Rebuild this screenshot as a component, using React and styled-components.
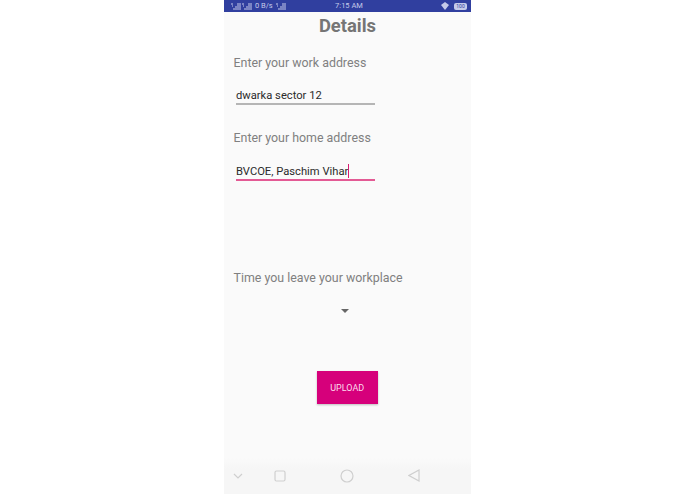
import styled, { createGlobalStyle } from "styled-components";

const Global = createGlobalStyle`
  html, body { margin: 0; background: #fff; }
  #root { width: 695px; height: 494px; overflow: hidden; }
`;

const Page = styled.div`
  display: flex;
  justify-content: center;
  height: 494px;
  font-family: Roboto, "Liberation Sans", sans-serif;
`;

const Phone = styled.div`
  width: 247px;
  height: 494px;
  background: #fafafa;
  display: flex;
  flex-direction: column;
`;

const StatusBar = styled.div`
  height: 12px;
  flex: none;
  background: #303f9f;
  color: #c5cae9;
  font-size: 7.5px;
  line-height: 12px;
  display: grid;
  grid-template-columns: 1fr auto 1fr;
  align-items: center;
  padding: 0 4px 0 7px;
  box-sizing: border-box;
`;

const StatusLeft = styled.div`
  display: flex;
  align-items: center;
  gap: 1px;
`;

const Speed = styled.span`
  margin: 0 2px 0 2px;
`;

const StatusRight = styled.div`
  display: flex;
  align-items: center;
  justify-content: flex-end;
  gap: 4px;
`;

const Battery = styled.span`
  width: 13px;
  height: 7px;
  font-size: 5px;
  line-height: 7px;
  text-align: center;
  color: #303f9f;
  background: #c5cae9;
  border-radius: 2px;
`;

const Title = styled.h1`
  margin: 0;
  font-size: 18.4px;
  line-height: 27px;
  font-weight: 700;
  color: #757575;
  text-align: center;
`;

const Content = styled.div`
  flex: 1;
  padding: 0 10px 0 9.5px;
  display: flex;
  flex-direction: column;
`;

const Label = styled.div`
  font-size: 12.4px;
  line-height: 18px;
  color: #808080;
  margin-top: ${(p) => p.$top}px;
`;

const Field = styled.div`
  width: 138.5px;
  height: 19px;
  margin: ${(p) => p.$top}px 0 0 2.5px;
  font-size: 11.2px;
  line-height: 20px;
  color: #2b2b2b;
  border-bottom: 2px solid ${(p) => (p.$active ? "#e35a94" : "#b5b5b5")};
  box-sizing: border-box;
`;

const Caret = styled.span`
  display: inline-block;
  width: 1px;
  height: 14px;
  background: #d81b72;
  vertical-align: -3px;
`;

const Spinner = styled.div`
  display: flex;
  justify-content: center;
  margin: 22px 0 0 -5px;
`;

const Arrow = styled.div`
  width: 0;
  height: 0;
  border-left: 4px solid transparent;
  border-right: 4px solid transparent;
  border-top: 4px solid #666;
`;

const UploadRow = styled.div`
  display: flex;
  justify-content: center;
  margin-top: 58px;
`;

const Upload = styled.button`
  width: 61px;
  height: 33px;
  border: 0;
  padding: 0;
  background: #d6007b;
  color: #fbdcec;
  font: 400 9px Roboto, "Liberation Sans", sans-serif;
  box-shadow: 0 1px 2px rgba(0, 0, 0, 0.25);
`;

const NavBar = styled.div`
  height: 36px;
  flex: none;
  background: linear-gradient(#fafafa, #f6f6f6 30%);
  display: grid;
  grid-template-columns: 27px 58px 76px 58px;
  align-items: center;
  justify-items: center;
  padding-bottom: 1px;
  box-sizing: border-box;
`;

const navStroke = { fill: "none", stroke: "#cfcfcf", strokeWidth: 1.2 };

function SignalIcon() {
  return (
    <svg width="10" height="7" viewBox="0 0 10 7">
      <path d="M0 1h2M1 3h1M7 0v7M9 0v7M5 3v4M3 5v2" stroke="#c5cae9" strokeWidth="1" fill="none" />
    </svg>
  );
}

export default function App() {
  return (
    <Page>
      <Global />
      <Phone>
        <StatusBar>
          <StatusLeft>
            <SignalIcon />
            <SignalIcon />
            <Speed>0 B/s</Speed>
            <SignalIcon />
          </StatusLeft>
          <span>7:15 AM</span>
          <StatusRight>
            <svg width="10" height="8" viewBox="0 0 10 8">
              <path d="M1 3 5 0l4 3-4 5z" fill="#c5cae9" />
            </svg>
            <Battery>100</Battery>
          </StatusRight>
        </StatusBar>
        <Title>Details</Title>
        <Content>
          <Label $top={15}>Enter your work address</Label>
          <Field $top={14}>dwarka sector 12</Field>
          <Label $top={24}>Enter your home address</Label>
          <Field $top={15} $active>
            BVCOE, Paschim Vihar
            <Caret />
          </Field>
          <Label $top={88}>Time you leave your workplace</Label>
          <Spinner>
            <Arrow />
          </Spinner>
          <UploadRow>
            <Upload>UPLOAD</Upload>
          </UploadRow>
        </Content>
        <NavBar>
          <svg width="10" height="6" viewBox="0 0 10 6">
            <path d="M1 1l4 4 4-4" {...navStroke} />
          </svg>
          <svg width="12" height="12" viewBox="0 0 12 12">
            <rect x="1" y="1" width="10" height="10" rx="1.5" {...navStroke} />
          </svg>
          <svg width="14" height="14" viewBox="0 0 14 14">
            <circle cx="7" cy="7" r="6" {...navStroke} />
          </svg>
          <svg width="12" height="13" viewBox="0 0 12 13">
            <path d="M11 1v11L1 6.5z" {...navStroke} />
          </svg>
        </NavBar>
      </Phone>
    </Page>
  );
}
